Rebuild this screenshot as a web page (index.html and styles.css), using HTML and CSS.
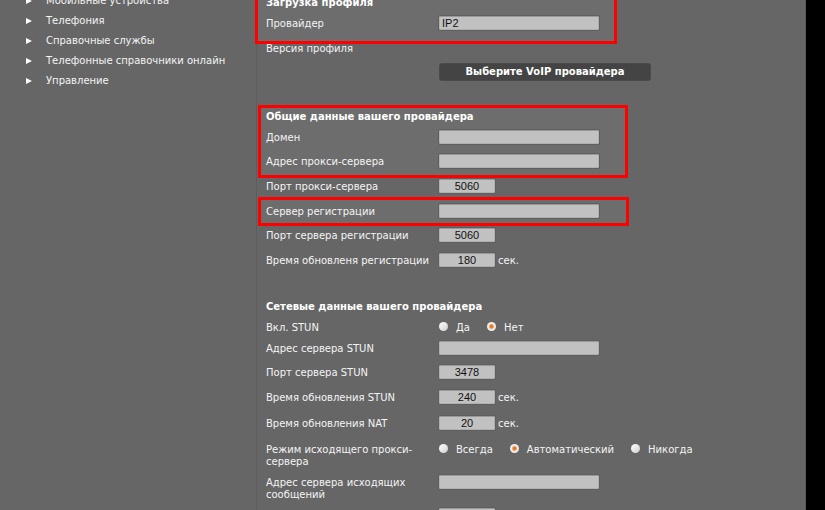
FILE: index.html
```
<!DOCTYPE html>
<html lang="ru">
<head>
<meta charset="utf-8">
<title>VoIP</title>
<link rel="stylesheet" href="styles.css">
</head>
<body>
<div class="page">
  <nav class="sidebar">
    <ul class="menu">
      <li><a href="#">Мобильные устройства</a></li>
      <li><a href="#">Телефония</a></li>
      <li><a href="#">Справочные службы</a></li>
      <li><a href="#">Телефонные справочники онлайн</a></li>
      <li><a href="#">Управление</a></li>
    </ul>
  </nav>
  <main class="content">
    <form>
      <section class="group">
        <div class="highlight highlight-profile"></div>
        <h2>Загрузка профиля</h2>
        <div class="rows rows-profile">
          <div class="row"><label for="provider">Провайдер</label><div class="field"><input class="text" id="provider" type="text" value="IP2"></div></div>
          <div class="row"><span class="name">Версия профиля</span></div>
          <div class="row"><span></span><button type="button" class="choose">Выберите VoIP провайдера</button></div>
        </div>
      </section>

      <section class="group">
        <div class="highlight highlight-domain"></div>
        <h2>Общие данные вашего провайдера</h2>
        <div class="rows rows-common">
          <div class="row"><label for="domain">Домен</label><div class="field"><input class="text" id="domain" type="text"></div></div>
          <div class="row"><label for="proxy">Адрес прокси-сервера</label><div class="field"><input class="text" id="proxy" type="text"></div></div>
          <div class="row"><label for="proxy-port">Порт прокси-сервера</label><div class="field"><input class="text number" id="proxy-port" type="text" value="5060"></div></div>
          <div class="row">
            <div class="highlight highlight-row"></div>
            <label for="registrar">Сервер регистрации</label><div class="field"><input class="text" id="registrar" type="text"></div>
          </div>
          <div class="row"><label for="registrar-port">Порт сервера регистрации</label><div class="field"><input class="text number" id="registrar-port" type="text" value="5060"></div></div>
          <div class="row"><label for="registrar-time">Время обновленя регистрации</label><div class="field"><input class="text number" id="registrar-time" type="text" value="180"><span class="unit">сек.</span></div></div>
        </div>
      </section>

      <section class="group">
        <h2>Сетевые данные вашего провайдера</h2>
        <div class="rows rows-network">
          <div class="row"><span class="name">Вкл. STUN</span>
            <div class="field choices">
              <label class="choice"><input type="radio" name="stun">Да</label>
              <label class="choice"><input type="radio" name="stun" checked>Нет</label>
            </div>
          </div>
          <div class="row"><label for="stun-server">Адрес сервера STUN</label><div class="field"><input class="text" id="stun-server" type="text"></div></div>
          <div class="row"><label for="stun-port">Порт сервера STUN</label><div class="field"><input class="text number" id="stun-port" type="text" value="3478"></div></div>
          <div class="row"><label for="stun-time">Время обновления STUN</label><div class="field"><input class="text number" id="stun-time" type="text" value="240"><span class="unit">сек.</span></div></div>
          <div class="row"><label for="nat-time">Время обновления NAT</label><div class="field"><input class="text number" id="nat-time" type="text" value="20"><span class="unit">сек.</span></div></div>
          <div class="row"><span class="name">Режим исходящего прокси-сервера</span>
            <div class="field choices">
              <label class="choice"><input type="radio" name="mode">Всегда</label>
              <label class="choice"><input type="radio" name="mode" checked>Автоматический</label>
              <label class="choice"><input type="radio" name="mode">Никогда</label>
            </div>
          </div>
          <div class="row"><label for="out-server">Адрес сервера исходящих сообщений</label><div class="field"><input class="text" id="out-server" type="text"></div></div>
          <div class="row"><span></span><div class="field"><input class="text number" type="text" aria-label="Порт"></div></div>
        </div>
      </section>
    </form>
  </main>
</div>
</body>
</html>
```
FILE: styles.css
```
* {
  box-sizing: border-box;
}

body {
  margin: 0;
  height: 100vh;
  overflow: hidden;
  background: #000;
  color: #f4f4f4;
  font: 10px/12px "DejaVu Sans", sans-serif;
}

.page {
  display: flex;
  height: 100vh;
  overflow: hidden;
  margin-right: 19px;
  background: #666;
  border-right: 1px solid #5a5a5a;
}

.sidebar {
  flex: 0 0 256px;
}

/* The page is scrolled: the first entries are cut by the window edge. */
.menu {
  margin: -9px 0 0;
  padding: 0 0 0 26px;
  list-style: none;
}

.menu li {
  display: flex;
  align-items: center;
  gap: 14px;
  height: 20px;
}

.menu li::before {
  content: "";
  border-left: 6px solid #fff;
  border-top: 3px solid transparent;
  border-bottom: 3px solid transparent;
}

.menu a {
  color: inherit;
  text-decoration: none;
}

.content {
  flex: 1;
  margin-top: -5px;
  padding-left: 9px;
  border-left: 1px solid #5c5c5c;
}

.group {
  position: relative;
  isolation: isolate;
  margin-bottom: 22px;
}

h2 {
  margin: 0 0 5px;
  color: #fff;
  font-size: 10px;
  line-height: 16px;
}

.rows {
  display: grid;
}

.rows-profile {
  grid-template-rows: 25px 22px 24px;
}

.rows-common {
  grid-template-rows: 24px 25px 25px 24px 25px 24px;
}

.rows-network {
  grid-template-rows: 21px 24px 25px 26px 26px 33px 33px 24px;
}

.row {
  position: relative;
  display: grid;
  grid-template-columns: 173px 1fr;
  align-items: start;
}

.row > label,
.row > .name {
  padding: 2px 4px 0 0;
}

.field {
  display: flex;
  gap: 3px;
}

.unit {
  padding-top: 2px;
}

.text {
  width: 160px;
  height: 14px;
  margin: 0;
  padding: 0 2px 1px;
  border: 1px solid #b0b0b0;
  border-top-color: #999;
  border-radius: 1px;
  outline: 1px solid #5f5f5f;
  background: #c1c1c1;
  color: #111;
  font: 11px/11px "Liberation Sans", sans-serif;
}

.number {
  width: 56px;
  text-align: center;
}

.choices {
  gap: 17px;
  padding-top: 2px;
}

.choice {
  display: flex;
  gap: 8px;
}

.choice input {
  appearance: none;
  width: 9px;
  height: 9px;
  margin: 0;
  border-radius: 50%;
  background: linear-gradient(135deg, #fff, #d0d0d0);
}

.choice input:checked {
  background: radial-gradient(circle, #e87820 0 1px, #f0a060 2px, #eee 3px);
}

.choose {
  justify-self: start;
  width: 212px;
  height: 18px;
  padding: 0;
  border: 1px solid #4a4a4a;
  border-radius: 3px;
  background: #444;
  color: #fff;
  font: bold 10px/12px "DejaVu Sans", sans-serif;
}

.highlight {
  position: absolute;
  z-index: -1;
  border: 3px solid #f00;
  background: #6d6d6d;
}

.highlight-profile {
  top: -4px;
  left: -11px;
  width: 362px;
  height: 53px;
}

.highlight-domain {
  top: -4px;
  left: -8px;
  width: 370px;
  height: 73px;
}

.highlight-row {
  top: -7px;
  left: -8px;
  width: 371px;
  height: 29px;
}
```
